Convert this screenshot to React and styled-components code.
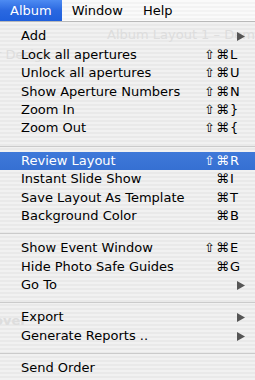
import React from "react";
import styled, { createGlobalStyle } from "styled-components";

const Global = createGlobalStyle`
  html, body {
    margin: 0;
    padding: 0;
    background: #eeeeee;
  }
  body {
    font-family: "DejaVu Sans", "Liberation Sans", sans-serif;
    font-size: 13px;
    color: #000;
  }
`;

const Screen = styled.div`
  width: 255px;
  height: 380px;
  overflow: hidden;
  display: flex;
  flex-direction: column;
  position: relative;
`;

const MenuBar = styled.div`
  display: flex;
  height: 21px;
  border-bottom: 1px solid #b9b9b9;
  background: repeating-linear-gradient(#fafafa 0 2px, #f3f3f3 2px 4px);
`;

const BarItem = styled.div`
  display: flex;
  align-items: center;
  padding: 0 10px;
  height: 21px;
  line-height: 21px;
  color: ${(p) => (p.active ? "#fff" : "#000")};
  background: ${(p) =>
    p.active ? "linear-gradient(#4d8bf2, #2a68e0 50%, #1f5fdc)" : "transparent"};
`;

const Menu = styled.div`
  position: relative;
  flex: 1;
  padding-top: 5.4px;
  background: repeating-linear-gradient(#f1f1f1 0 2px, #e9e9e9 2px 4px);
`;

/* faint window text showing through the translucent menu */
const Ghost = styled.div`
  position: absolute;
  left: ${(p) => p.x}px;
  top: ${(p) => p.y}px;
  color: #dddddd;
  white-space: nowrap;
  font-weight: ${(p) => (p.bold ? "bold" : "normal")};
  pointer-events: none;
`;

const Item = styled.div`
  position: relative;
  display: flex;
  align-items: center;
  height: 18.4px;
  line-height: 18.4px;
  padding: 0 10px 0 21px;
  color: ${(p) => (p.selected ? "#fff" : "#000")};
  background: ${(p) =>
    p.selected ? "linear-gradient(#3f79d9, #3670d2)" : "transparent"};
`;

const Label = styled.span`
  flex: 1;
  white-space: nowrap;
`;

const Mods = styled.span`
  width: 30px;
  text-align: right;
  letter-spacing: 1px;
`;

const Key = styled.span`
  width: 15px;
  text-align: left;
`;

const Arrow = styled.svg`
  width: 8px;
  height: 9px;
`;

const Separator = styled.div`
  height: 1px;
  margin: 8px 0 5px;
  background: #cbcbcb;
`;

const groups = [
  [
    { label: "Add", sub: true },
    { label: "Lock all apertures", mods: "⇧⌘", key: "L" },
    { label: "Unlock all apertures", mods: "⇧⌘", key: "U" },
    { label: "Show Aperture Numbers", mods: "⇧⌘", key: "N" },
    { label: "Zoom In", mods: "⇧⌘", key: "}" },
    { label: "Zoom Out", mods: "⇧⌘", key: "{" },
  ],
  [
    { label: "Review Layout", mods: "⇧⌘", key: "R", selected: true },
    { label: "Instant Slide Show", mods: "⌘", key: "I" },
    { label: "Save Layout As Template", mods: "⌘", key: "T" },
    { label: "Background Color", mods: "⌘", key: "B" },
  ],
  [
    { label: "Show Event Window", mods: "⇧⌘", key: "E" },
    { label: "Hide Photo Safe Guides", mods: "⌘", key: "G" },
    { label: "Go To", sub: true },
  ],
  [
    { label: "Export", sub: true },
    { label: "Generate Reports ..", sub: true },
  ],
  [{ label: "Send Order" }],
];

function MenuItem({ item }) {
  return (
    <Item selected={item.selected}>
      <Label>{item.label}</Label>
      {item.key && (
        <>
          <Mods>{item.mods}</Mods>
          <Key>{item.key}</Key>
        </>
      )}
      {item.sub && (
        <Arrow viewBox="0 0 8 9">
          <polygon points="0,0 8,4.5 0,9" fill="#555" />
        </Arrow>
      )}
    </Item>
  );
}

export default function App() {
  return (
    <Screen>
      <Global />
      <MenuBar>
        <BarItem active>Album</BarItem>
        <BarItem>Window</BarItem>
        <BarItem>Help</BarItem>
      </MenuBar>
      <Menu>
        <Ghost x={107} y={5}>Album Layout 1 – Demo</Ghost>
        <Ghost x={-4} y={25}>r Design</Ghost>
        <Ghost x={-6} y={291} bold>over</Ghost>
        {groups.map((g, i) => (
          <React.Fragment key={i}>
            {i > 0 && <Separator />}
            {g.map((item) => (
              <MenuItem key={item.label} item={item} />
            ))}
          </React.Fragment>
        ))}
      </Menu>
    </Screen>
  );
}
